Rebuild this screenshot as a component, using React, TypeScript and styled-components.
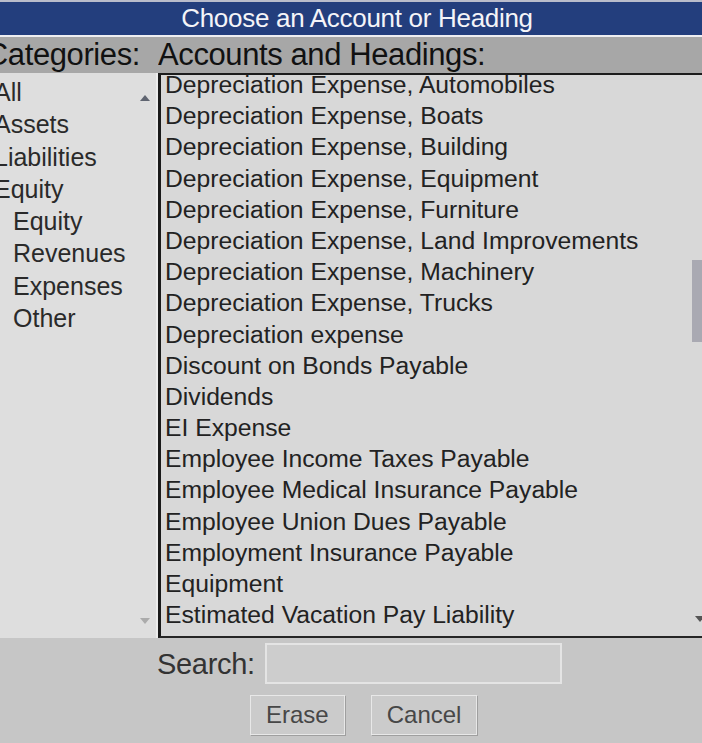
import React from "react";
import styled, { createGlobalStyle } from "styled-components";

const GlobalStyle = createGlobalStyle`
  html, body { margin: 0; padding: 0; }
  body {
    background: #c6c6c6;
    font-family: "Liberation Sans", Arial, sans-serif;
    overflow: hidden;
  }
`;

const Window = styled.div`
  width: 702px;
  height: 743px;
  display: flex;
  flex-direction: column;
  background: #c6c6c6;
  overflow: hidden;
`;

const TitleBar = styled.div`
  height: 35px;
  flex: none;
  background: #233e7d;
  border-top: 2px solid #b9bccb;
  box-sizing: border-box;
  display: flex;
  align-items: center;
  justify-content: center;
  padding-left: 12px;
  color: #f4f4f8;
  font-size: 26px;
  letter-spacing: -0.3px;
`;

const TitleRule = styled.div`
  height: 2px;
  flex: none;
  background: #eeeef2;
`;

const HeaderRow = styled.div`
  height: 36px;
  flex: none;
  display: grid;
  grid-template-columns: 158px 1fr;
  background: #a7a7a7;
  color: #111;
  font-size: 31px;
  letter-spacing: -0.4px;
`;

const HeaderCell = styled.div<{ $align?: "start" | "end" }>`
  display: flex;
  align-items: center;
  justify-content: ${(p) => (p.$align === "end" ? "flex-end" : "flex-start")};
  padding-right: ${(p) => (p.$align === "end" ? "18px" : "0")};
  white-space: nowrap;
  overflow: hidden;
`;

const Main = styled.div`
  height: 565px;
  flex: none;
  display: grid;
  grid-template-columns: 158px 1fr;
  grid-template-rows: 565px;
`;

const CategoryPanel = styled.div`
  display: flex;
  background: #dedede;
  border-right: 2px solid #ececec;
  overflow: hidden;
`;

const CategoryList = styled.ul`
  flex: 1;
  list-style: none;
  margin: 0;
  padding: 3px 0 0 0;
  overflow: hidden;
`;

const CategoryItem = styled.li<{ $level: number }>`
  height: 32.3px;
  line-height: 32.3px;
  font-size: 25px;
  color: #2a2a2a;
  white-space: nowrap;
  margin-left: ${(p) => (p.$level === 0 ? "-6px" : "13px")};
`;

const PanelScroll = styled.div`
  width: 22px;
  flex: none;
  display: flex;
  flex-direction: column;
  align-items: center;
  justify-content: space-between;
  padding: 22px 0 14px;
`;

const Arrow = styled.span<{ $dir: "up" | "down"; $color: string }>`
  display: block;
  width: 0;
  height: 0;
  border-left: 5px solid transparent;
  border-right: 5px solid transparent;
  ${(p) =>
    p.$dir === "up"
      ? `border-bottom: 6px solid ${p.$color};`
      : `border-top: 6px solid ${p.$color};`}
`;

const AccountPanel = styled.div`
  display: flex;
  background: #d8d8d8;
  border-top: 2px solid #1c1c1c;
  border-left: 3px solid #1a1a1a;
  border-bottom: 2px solid #262626;
  overflow: hidden;
`;

const AccountViewport = styled.div`
  flex: 1;
  overflow: hidden;
`;

const AccountList = styled.ul`
  list-style: none;
  margin: -6px 0 0 0;
  padding: 0 0 0 4px;
`;

const AccountItem = styled.li`
  height: 31.2px;
  line-height: 31.2px;
  font-size: 24.7px;
  color: #222;
  white-space: nowrap;
`;

const ListScroll = styled.div`
  width: 11px;
  flex: none;
  display: flex;
  flex-direction: column;
  align-items: flex-end;
  padding-bottom: 14px;
`;

const Thumb = styled.div`
  width: 10px;
  height: 82px;
  background: #a9a9b2;
`;

const BottomArrow = styled.div`
  margin-top: auto;
  margin-right: -3px;
`;

const Footer = styled.div`
  flex: 1;
  display: flex;
  flex-direction: column;
  gap: 11px;
  padding-top: 5px;
  background: #c6c6c6;
`;

const SearchRow = styled.div`
  display: flex;
  align-items: center;
  gap: 10px;
  padding-left: 157px;
`;

const SearchLabel = styled.label`
  font-size: 29px;
  line-height: 34px;
  color: #333;
  letter-spacing: -0.3px;
`;

const SearchInput = styled.input`
  width: 297px;
  height: 41px;
  box-sizing: border-box;
  background: #cdcdcd;
  border: 2px solid #e4e4e4;
  outline: none;
  font-family: inherit;
  font-size: 22px;
`;

const ButtonRow = styled.div`
  display: flex;
  gap: 26px;
  padding-left: 250px;
`;

const Button = styled.button`
  height: 40px;
  box-sizing: border-box;
  padding: 0 15px;
  background: #cbcbcb;
  border: 1px solid #e8e8e8;
  box-shadow: 1px 1px 0 #9f9f9f;
  font-family: inherit;
  font-size: 24px;
  color: #474747;
`;

const categories = [
  { name: "All", level: 0 },
  { name: "Assets", level: 0 },
  { name: "Liabilities", level: 0 },
  { name: "Equity", level: 0 },
  { name: "Equity", level: 1 },
  { name: "Revenues", level: 1 },
  { name: "Expenses", level: 1 },
  { name: "Other", level: 1 },
];

const accounts = [
  "Depreciation Expense, Automobiles",
  "Depreciation Expense, Boats",
  "Depreciation Expense, Building",
  "Depreciation Expense, Equipment",
  "Depreciation Expense, Furniture",
  "Depreciation Expense, Land Improvements",
  "Depreciation Expense, Machinery",
  "Depreciation Expense, Trucks",
  "Depreciation expense",
  "Discount on Bonds Payable",
  "Dividends",
  "EI Expense",
  "Employee Income Taxes Payable",
  "Employee Medical Insurance Payable",
  "Employee Union Dues Payable",
  "Employment Insurance Payable",
  "Equipment",
  "Estimated Vacation Pay Liability",
];

export default function App() {
  return (
    <>
      <GlobalStyle />
      <Window>
        <TitleBar>Choose an Account or Heading</TitleBar>
        <TitleRule />
        <HeaderRow>
          <HeaderCell $align="end">Categories:</HeaderCell>
          <HeaderCell>Accounts and Headings:</HeaderCell>
        </HeaderRow>
        <Main>
          <CategoryPanel>
            <CategoryList>
              {categories.map((c, i) => (
                <CategoryItem key={i} $level={c.level}>
                  {c.name}
                </CategoryItem>
              ))}
            </CategoryList>
            <PanelScroll>
              <Arrow $dir="up" $color="#5f6470" />
              <Arrow $dir="down" $color="#ababab" />
            </PanelScroll>
          </CategoryPanel>
          <AccountPanel>
            <AccountViewport>
              <AccountList>
                {accounts.map((a) => (
                  <AccountItem key={a}>{a}</AccountItem>
                ))}
              </AccountList>
            </AccountViewport>
            <ListScroll>
              <Thumb style={{ marginTop: 185 }} />
              <BottomArrow>
                <Arrow $dir="down" $color="#555" />
              </BottomArrow>
            </ListScroll>
          </AccountPanel>
        </Main>
        <Footer>
          <SearchRow>
            <SearchLabel htmlFor="search">Search:</SearchLabel>
            <SearchInput id="search" />
          </SearchRow>
          <ButtonRow>
            <Button>Erase</Button>
            <Button>Cancel</Button>
          </ButtonRow>
        </Footer>
      </Window>
    </>
  );
}
